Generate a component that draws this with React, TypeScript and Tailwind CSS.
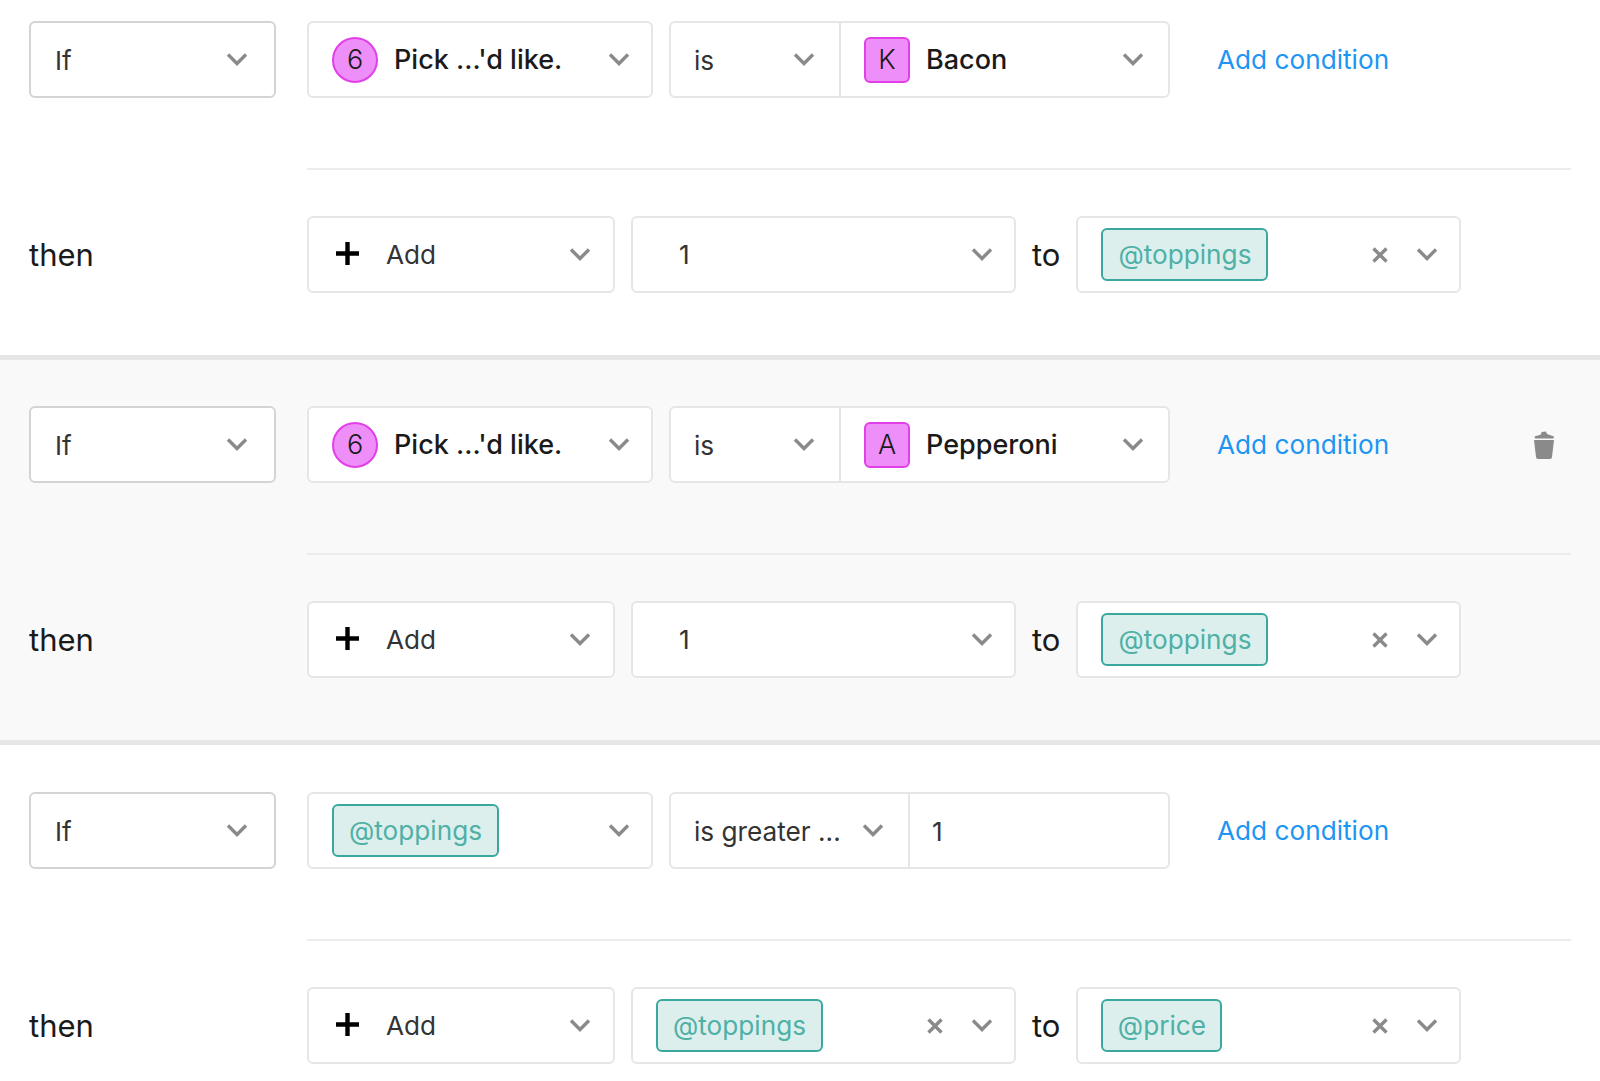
import type { ReactNode } from "react";

const Chevron = () => (
  <svg width="22" height="14" viewBox="0 0 22 14" fill="none" className="mb-[2px] shrink-0">
    <path d="M2 2.5 L11 11.5 L20 2.5" stroke="#8a8a8a" strokeWidth="3.4" />
  </svg>
);

const Clear = () => (
  <svg width="16" height="16" viewBox="0 0 16 16" fill="none" className="shrink-0">
    <path d="M1.5 1.5 L14.5 14.5 M14.5 1.5 L1.5 14.5" stroke="#8a8a8a" strokeWidth="3.4" />
  </svg>
);

const Plus = () => (
  <svg width="25" height="25" viewBox="0 0 25 25" fill="none" className="mb-[2px] shrink-0">
    <path d="M12.5 1 V24 M1 12.5 H24" stroke="#000" strokeWidth="4.4" />
  </svg>
);

const Trash = () => (
  <svg width="22" height="28" viewBox="0 0 22 28" className="shrink-0" fill="#8a8a8a">
    <path d="M1 9 H21 L19 26 Q18.8 28 17 28 H5 Q3.2 28 3 26 Z" />
    <path d="M1.5 5.5 L8 3.5 L8.5 1 L13 0.5 L14 3 L21 5.5 L20.5 7.5 L2 7.5 Z" />
  </svg>
);

const Tag = ({ children, width }: { children: ReactNode; width: string }) => (
  <span className={`flex h-[53px] items-center justify-center rounded-md border-2 border-[#3aa89e] bg-[#dcefed] text-[#4fb0a6] ${width}`}>
    <span className="pt-[1px]">{children}</span>
  </span>
);

const Box = ({
  width,
  padding = "pl-[23px] pr-[21px]",
  border = "border-[#e6e6e6]",
  children,
}: {
  width: string;
  padding?: string;
  border?: string;
  children: ReactNode;
}) => (
  <div className={`flex h-[77px] shrink-0 items-center justify-between rounded-md border-2 bg-white ${border} ${padding} ${width}`}>
    {children}
  </div>
);

const IfSelect = () => (
  <Box width="w-[247px]" padding="pl-[24px] pr-[26px]" border="border-[#d4d4d4]">
    <span className="pt-[2px]">If</span>
    <Chevron />
  </Box>
);

const Question = () => (
  <Box width="w-[346px]">
    <span className="flex items-center gap-[16px] text-[27px] font-medium text-[#1a1a1a]">
      <span className="flex h-[46px] w-[46px] items-center justify-center rounded-full border-2 border-[#e23fe8] bg-[#ee8ef8] font-light">
        <span className="pt-[2px]">6</span>
      </span>
      <span className="pt-[2px]">Pick ...'d like.</span>
    </span>
    <Chevron />
  </Box>
);

const IsAnswer = ({ letter, name }: { letter: string; name: string }) => (
  <div className="ml-[16px] flex h-[77px] w-[501px] shrink-0 rounded-md border-2 border-[#e6e6e6] bg-white">
    <div className="flex w-[170px] items-center justify-between border-r-2 border-[#e6e6e6] pl-[23px] pr-[24px]">
      <span className="pt-[2px]">is</span>
      <Chevron />
    </div>
    <div className="flex flex-1 items-center justify-between pl-[23px] pr-[24px]">
      <span className="flex items-center gap-[16px] text-[27px] font-medium text-[#1a1a1a]">
        <span className="flex h-[46px] w-[46px] items-center justify-center rounded-md border-2 border-[#e23fe8] bg-[#ee8ef8] font-light">
          <span className="pt-[2px]">{letter}</span>
        </span>
        <span className="pt-[2px]">{name}</span>
      </span>
      <Chevron />
    </div>
  </div>
);

const GreaterThan = () => (
  <div className="ml-[16px] flex h-[77px] w-[501px] shrink-0 rounded-md border-2 border-[#e6e6e6] bg-white">
    <div className="flex w-[239px] items-center justify-between border-r-2 border-[#e6e6e6] pl-[23px] pr-[24px]">
      <span className="pt-[2px]">is greater ...</span>
      <Chevron />
    </div>
    <div className="flex flex-1 items-center pl-[22px] pt-[2px]">1</div>
  </div>
);

const ToppingsQuestion = () => (
  <Box width="w-[346px]">
    <Tag width="w-[167px]">@toppings</Tag>
    <Chevron />
  </Box>
);

const AddSelect = () => (
  <Box width="w-[308px]" padding="pl-[23px] pr-[22px]">
    <span className="flex items-center gap-[26px]">
      <span className="pl-[3px]">
        <Plus />
      </span>
      <span className="pt-[1px]">Add</span>
    </span>
    <Chevron />
  </Box>
);

const ValueSelect = ({ tag, tagWidth, width }: { tag: string; tagWidth: string; width: string }) => (
  <Box width={width}>
    <Tag width={tagWidth}>{tag}</Tag>
    <span className="flex items-center gap-[28px]">
      <Clear />
      <Chevron />
    </span>
  </Box>
);

const NumberSelect = () => (
  <Box width="w-[385px]" padding="pl-[46px] pr-[21px]">
    <span className="pt-[1px]">1</span>
    <Chevron />
  </Box>
);

const Rule = ({
  first,
  condition,
  value,
  target,
  shaded,
  removable,
}: {
  first: ReactNode;
  condition: ReactNode;
  value: ReactNode;
  target: ReactNode;
  shaded?: boolean;
  removable?: boolean;
}) => (
  <section className={`pl-[29px] pr-[29px] ${shaded ? "bg-[#f9f9f9]" : "bg-white"}`}>
    <div className="flex items-center">
      <IfSelect />
      <div className="ml-[31px]">{first}</div>
      {condition}
      <a className="ml-[47px] pt-[1px] text-[#1d95f3]">Add condition</a>
      {removable && (
        <span className="ml-auto mr-[16px]">
          <Trash />
        </span>
      )}
    </div>
    <div className="ml-[278px] mb-[46px] mt-[70px] h-[2px] bg-[#ececec]" />
    <div className="flex items-center">
      <span className="w-[278px] shrink-0 pt-[2px] text-[31px] text-[#1a1a1a]">then</span>
      <AddSelect />
      <div className="ml-[16px]">{value}</div>
      <span className="mx-[16px] pt-[2px] text-[31px] text-[#1a1a1a]">to</span>
      {target}
    </div>
  </section>
);

export default function App() {
  return (
    <div className="h-[1081px] w-[1600px] overflow-hidden bg-white font-['Inter',sans-serif] text-[26.2px] text-[#333]">
      <div className="h-[355px] pt-[21px]">
        <Rule
          first={<Question />}
          condition={<IsAnswer letter="K" name="Bacon" />}
          value={<NumberSelect />}
          target={<ValueSelect tag="@toppings" tagWidth="w-[167px]" width="w-[385px]" />}
        />
      </div>
      <div className="h-[385px] border-t-[5px] border-[#e6e6e6] bg-[#f9f9f9] pt-[46px]">
        <Rule
          shaded
          removable
          first={<Question />}
          condition={<IsAnswer letter="A" name="Pepperoni" />}
          value={<NumberSelect />}
          target={<ValueSelect tag="@toppings" tagWidth="w-[167px]" width="w-[385px]" />}
        />
      </div>
      <div className="border-t-[5px] border-[#e6e6e6] pt-[47px]">
        <Rule
          first={<ToppingsQuestion />}
          condition={<GreaterThan />}
          value={<ValueSelect tag="@toppings" tagWidth="w-[167px]" width="w-[385px]" />}
          target={<ValueSelect tag="@price" tagWidth="w-[121px]" width="w-[385px]" />}
        />
      </div>
    </div>
  );
}
